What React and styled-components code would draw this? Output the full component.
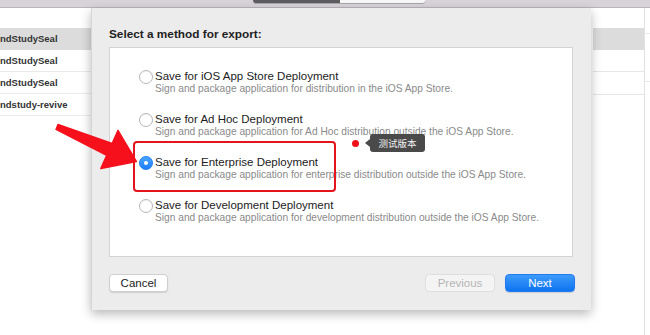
import React from "react"
import styled, { createGlobalStyle } from "styled-components"

const GlobalStyle = createGlobalStyle`
  html, body {
    margin: 0;
    padding: 0;
    background: #fff;
  }
  body {
    font-family: "Liberation Sans", Arial, sans-serif;
  }
`

const options = [
  {
    title: "Save for iOS App Store Deployment",
    sub: "Sign and package application for distribution in the iOS App Store.",
  },
  {
    title: "Save for Ad Hoc Deployment",
    sub: "Sign and package application for Ad Hoc distribution outside the iOS App Store.",
  },
  {
    title: "Save for Enterprise Deployment",
    sub: "Sign and package application for enterprise distribution outside the iOS App Store.",
    checked: true,
  },
  {
    title: "Save for Development Deployment",
    sub: "Sign and package application for development distribution outside the iOS App Store.",
  },
]

const leftRows = ["ndStudySeal", "ndStudySeal", "ndStudySeal", "ndstudy-revive"]

const App = () => {
  return (
    <Screen>
      <GlobalStyle />
      <TitleBar>
        <Segment>
          <SegPart dark />
          <SegPart />
        </Segment>
      </TitleBar>
      <Body>
        <SideList>
          {leftRows.map((r, i) => (
            <ListRow key={i} selected={i === 0}>
              {r}
            </ListRow>
          ))}
        </SideList>

        <Sheet>
          <Heading>Select a method for export:</Heading>
          <OptionsBox>
            {options.map((o, i) => (
              <Option key={i}>
                <Radio checked={o.checked} />
                <OptionText>
                  <OptionTitle>{o.title}</OptionTitle>
                  <OptionSub>{o.sub}</OptionSub>
                </OptionText>
              </Option>
            ))}
          </OptionsBox>
          <Footer>
            <Button>Cancel</Button>
            <FooterRight>
              <Button disabled>Previous</Button>
              <Button primary>Next</Button>
            </FooterRight>
          </Footer>
        </Sheet>

        <RightList>
          <RightCol>
            <RightRow selected />
            <RightRow />
            <RightRow />
          </RightCol>
          <RightEdge />
        </RightList>
      </Body>

      <Highlight />
      <Arrow viewBox="0 0 650 335">
        <polygon
          points="58,124.5 112.1,143.5 118,130.3 136.5,161.5 100.8,168.5 106.7,155.3 56,129.5"
          fill="#f5101c"
          stroke="#f5101c"
          strokeWidth="1.4"
          strokeLinejoin="round"
        />
      </Arrow>
      <Dot />
      <Tip>测试版本</Tip>
    </Screen>
  )
}

export default App

const Screen = styled.div`
  position: relative;
  width: 650px;
  height: 335px;
  overflow: hidden;
  background: #fff;
  display: flex;
  flex-direction: column;
`

const TitleBar = styled.div`
  height: 7px;
  flex: none;
  background: #d8d3d8;
  border-bottom: 1px solid #b9b4b9;
  display: flex;
  justify-content: flex-start;
  padding-left: 253px;
`

const Segment = styled.div`
  display: flex;
  height: 3px;
  width: 172px;
  border-radius: 0 0 3px 3px;
  overflow: hidden;
  box-shadow: 0 1px 0 #a9a4a9;
`

const SegPart = styled.div`
  flex: ${({ dark }) => (dark ? "0 0 87px" : "1")};
  background: ${({ dark }) => (dark ? "#5d5c5e" : "#f7f7f7")};
`

const Body = styled.div`
  flex: 1;
  display: flex;
  align-items: flex-start;
`

const SideList = styled.div`
  width: 91px;
  flex: none;
  padding-top: 20px;
  display: flex;
  flex-direction: column;
`

const ListRow = styled.div`
  height: 22px;
  line-height: 22px;
  font-size: 9.5px;
  font-weight: bold;
  color: #333;
  white-space: nowrap;
  background: ${({ selected }) => (selected ? "#dcdcdc" : "#fff")};
  border-bottom: 1px solid ${({ selected }) => (selected ? "#dcdcdc" : "#ebebeb")};
  box-sizing: border-box;
`

const Sheet = styled.div`
  width: 500px;
  flex: none;
  height: 302px;
  box-sizing: border-box;
  background: #ececec;
  border-left: 1px solid #d6d6d6;
  box-shadow: 0 4px 10px rgba(0, 0, 0, 0.28);
  padding: 18px 17px 0 17px;
  display: flex;
  flex-direction: column;
  position: relative;
  z-index: 1;
`

const Heading = styled.div`
  font-size: 11.8px;
  font-weight: bold;
  color: #1e1e1e;
  height: 17px;
  line-height: 17px;
  margin-bottom: 4px;
`

const OptionsBox = styled.div`
  height: 210px;
  width: 464px;
  box-sizing: border-box;
  background: #fff;
  border: 1px solid #d4d4d4;
  padding: 22px 0 0 29px;
  display: flex;
  flex-direction: column;
  gap: 18px;
`

const Option = styled.div`
  display: flex;
  align-items: flex-start;
  height: 25px;
`

const Radio = styled.span`
  width: 14px;
  height: 14px;
  box-sizing: border-box;
  border-radius: 50%;
  flex: none;
  margin-right: 2px;
  position: relative;
  background: ${({ checked }) =>
    checked ? "linear-gradient(#4aa4ff, #1a7ef7)" : "#fff"};
  border: 1px solid ${({ checked }) => (checked ? "#1d7ff2" : "#b6b6b6")};
  box-shadow: inset 0 1px 1px rgba(0, 0, 0, ${({ checked }) => (checked ? 0 : 0.06)});
  &::after {
    content: "";
    display: ${({ checked }) => (checked ? "block" : "none")};
    position: absolute;
    left: 4px;
    top: 4px;
    width: 4px;
    height: 4px;
    border-radius: 50%;
    background: #fff;
  }
`

const OptionText = styled.div`
  display: flex;
  flex-direction: column;
`

const OptionTitle = styled.div`
  font-size: 11.5px;
  line-height: 13px;
  color: #1c1c1c;
  white-space: nowrap;
`

const OptionSub = styled.div`
  font-size: 10.2px;
  line-height: 11px;
  color: #8a8a8a;
  white-space: nowrap;
`

const Footer = styled.div`
  display: flex;
  justify-content: space-between;
  align-items: center;
  width: 466px;
  margin-top: 17px;
`

const FooterRight = styled.div`
  display: flex;
  gap: 10px;
`

const Button = styled.button`
  width: 70px;
  height: 18px;
  padding: 0;
  border-radius: 4px;
  font-family: "Liberation Sans", Arial, sans-serif;
  font-size: 11.5px;
  line-height: 16px;
  color: ${({ primary, disabled }) => (primary ? "#fff" : disabled ? "#b4b4b4" : "#222")};
  background: ${({ primary, disabled }) =>
    primary ? "linear-gradient(#3d9bfb, #0f73f0)" : disabled ? "#f4f4f4" : "#fff"};
  border: 1px solid ${({ primary, disabled }) => (primary ? "#1f7bef" : disabled ? "#dedede" : "#cfcfcf")};
  box-shadow: ${({ disabled }) => (disabled ? "none" : "0 1px 1px rgba(0,0,0,0.12)")};
  &:first-child {
    width: ${({ primary, disabled }) => (primary || disabled ? "70px" : "59px")};
  }
`

const RightList = styled.div`
  flex: 1;
  display: flex;
  padding-left: 2px;
`

const RightCol = styled.div`
  width: 51px;
  padding-top: 20px;
  border-right: 1px solid #e2e2e2;
  height: 330px;
  display: flex;
  flex-direction: column;
`

const RightRow = styled.div`
  height: 22px;
  box-sizing: border-box;
  background: ${({ selected }) => (selected ? "#dcdcdc" : "#fff")};
  border-bottom: 1px solid ${({ selected }) => (selected ? "#dcdcdc" : "#e6e6e6")};
  &:last-child {
    height: 23px;
  }
`

const RightEdge = styled.div`
  flex: 1;
  margin-top: 25px;
  height: 47px;
  border-top: 1px solid #e8e8e8;
  border-bottom: 1px solid #e8e8e8;
`

const Highlight = styled.div`
  position: absolute;
  left: 133px;
  top: 141px;
  width: 203px;
  height: 51px;
  box-sizing: border-box;
  border: 2px solid #e3141c;
  border-radius: 4px;
  z-index: 2;
`

const Arrow = styled.svg`
  position: absolute;
  left: 0;
  top: 0;
  width: 650px;
  height: 335px;
  z-index: 3;
  pointer-events: none;
`

const Dot = styled.span`
  position: absolute;
  left: 352px;
  top: 140px;
  width: 7px;
  height: 7px;
  border-radius: 50%;
  background: #f0101a;
  z-index: 3;
`

const Tip = styled.div`
  position: absolute;
  left: 370px;
  top: 134px;
  width: 55px;
  height: 18px;
  border-radius: 3px;
  background: #4a4a4a;
  color: #f2f2f2;
  font-family: "Noto Sans CJK SC", sans-serif;
  font-size: 9.5px;
  line-height: 18px;
  text-align: center;
  z-index: 3;
  &::before {
    content: "";
    position: absolute;
    left: -5px;
    top: 5px;
    border-top: 4px solid transparent;
    border-bottom: 4px solid transparent;
    border-right: 5px solid #4a4a4a;
  }
`
